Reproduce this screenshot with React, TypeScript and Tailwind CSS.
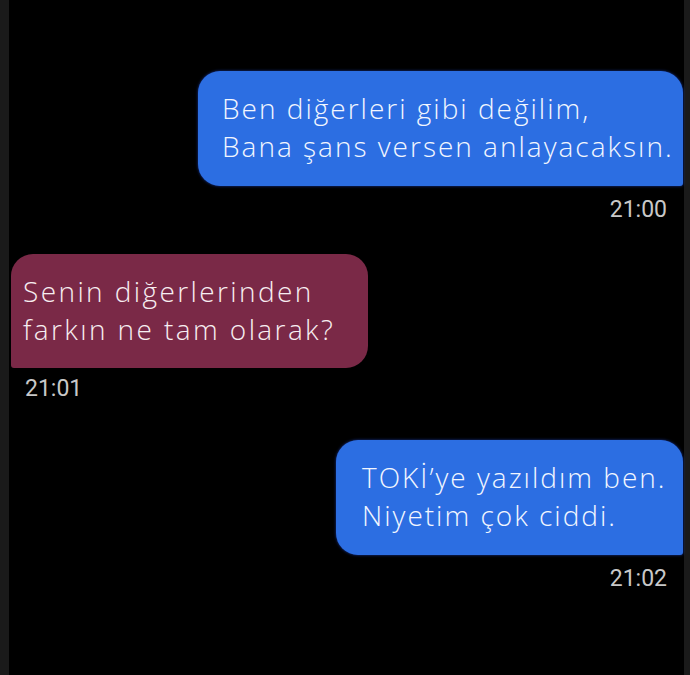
import React from 'react';

const bubbleFont = { fontFamily: '"Open Sans", "Noto Sans", sans-serif' };
const timeFont = { fontFamily: 'Roboto, "Liberation Sans", sans-serif' };

type Props = { lines: string[]; time: string; className?: string; bubble: string; stamp: string };

const Outgoing: React.FC<Props> = ({ lines, time, className, bubble, stamp }) => (
  <div className={`flex flex-col items-end ${className ?? ''}`}>
    <div
      className={`bg-[#2c6ee2] text-[#f2f6ff] rounded-[22px] rounded-br-[3px] whitespace-nowrap text-[28px] font-light tracking-[2px] leading-[38px] shadow-[0_0_3px_rgba(40,90,255,0.6)] ${bubble}`}
      style={bubbleFont}
    >
      {lines.map((l) => (
        <div key={l}>{l}</div>
      ))}
    </div>
    <div className={`mr-[16px] text-[23px] leading-[26px] text-[#c8c8c8] ${stamp}`} style={timeFont}>
      {time}
    </div>
  </div>
);

const Incoming: React.FC<Props> = ({ lines, time, className, bubble, stamp }) => (
  <div className={`flex flex-col items-start ${className ?? ''}`}>
    <div
      className={`bg-[#7a2947] text-[#f7eef1] rounded-[22px] rounded-bl-[3px] whitespace-nowrap text-[28px] font-light tracking-[2.4px] leading-[38px] ${bubble}`}
      style={bubbleFont}
    >
      {lines.map((l) => (
        <div key={l}>{l}</div>
      ))}
    </div>
    <div className={`ml-[14px] text-[23px] leading-[26px] text-[#c8c8c8] ${stamp}`} style={timeFont}>
      {time}
    </div>
  </div>
);

export default function App() {
  return (
    <div className="w-[690px] h-[675px] bg-[#1a1a1a] flex overflow-hidden">
      <div className="flex-1 ml-[9px] mr-[6px] bg-black flex flex-col">
        <Outgoing
          className="mt-[71px] mr-[1px]"
          bubble="w-[485px] pl-[24px] pt-[18px] pb-[21px]"
          stamp="mt-[11px]"
          lines={['Ben diğerleri gibi değilim,', 'Bana şans versen anlayacaksın.']}
          time="21:00"
        />
        <Incoming
          className="mt-[31px] ml-[2px]"
          bubble="w-[357px] pl-[12px] pt-[18px] pb-[20px]"
          stamp="mt-[8px]"
          lines={['Senin diğerlerinden', 'farkın ne tam olarak?']}
          time="21:01"
        />
        <Outgoing
          className="mt-[38px] mr-[1px]"
          bubble="w-[347px] pl-[26px] pt-[18px] pb-[21px]"
          stamp="mt-[11px]"
          lines={['TOKİ’ye yazıldım ben.', 'Niyetim çok ciddi.']}
          time="21:02"
        />
      </div>
    </div>
  );
}
